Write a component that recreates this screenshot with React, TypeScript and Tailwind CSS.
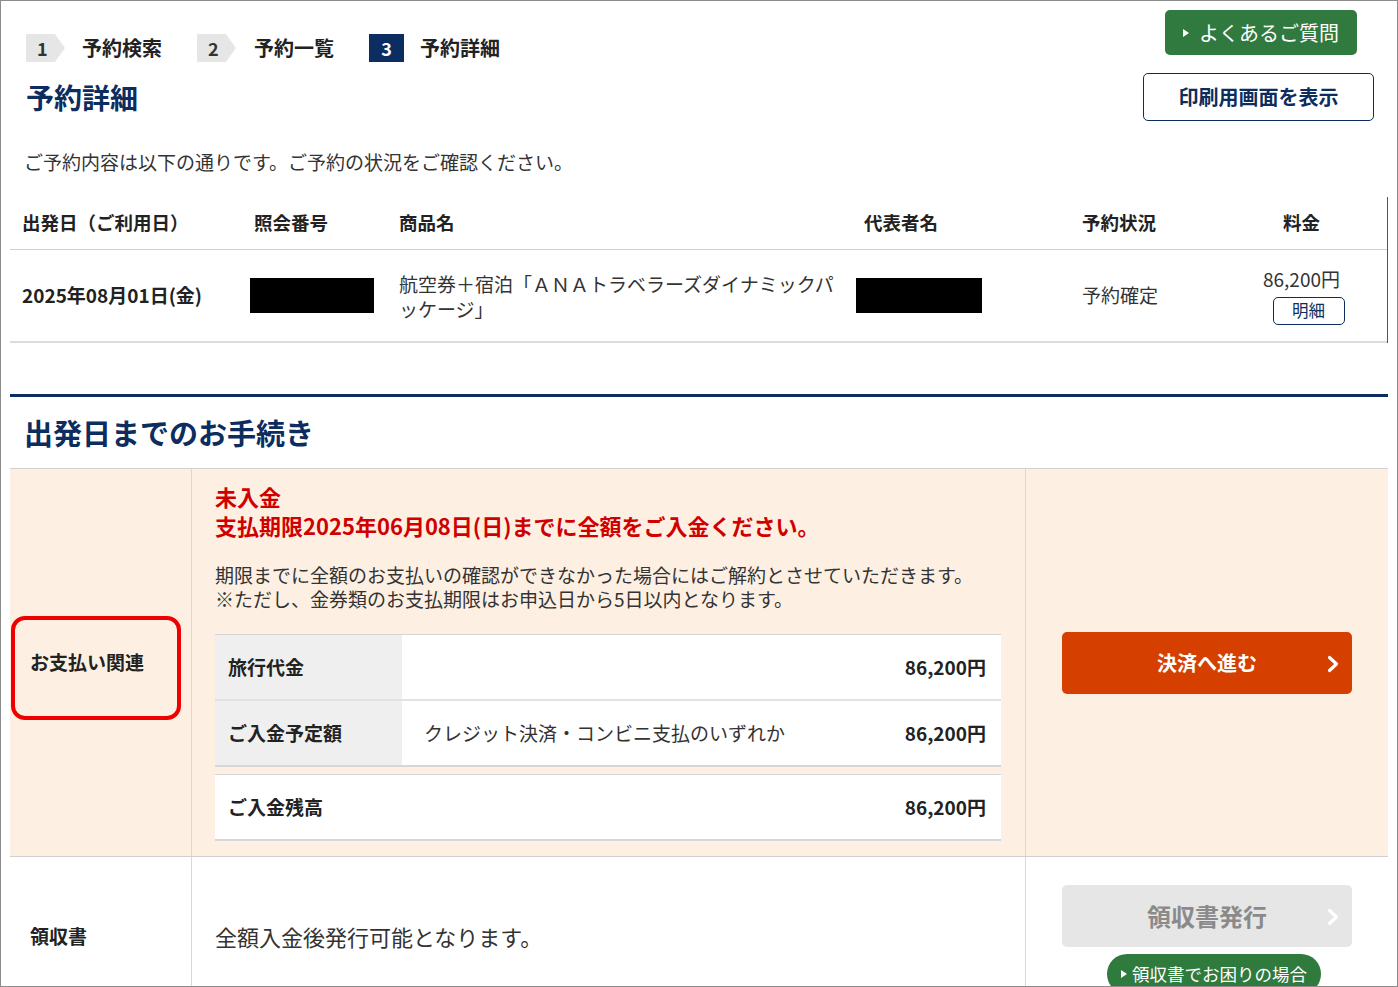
import React from 'react'

function StepBox({ n, active = false }: { n: string; active?: boolean }) {
  if (active) {
    return (
      <span className="flex h-[28px] w-[35px] items-center justify-center bg-[#0c2d62] text-[18px] font-bold leading-none text-white">
        {n}
      </span>
    )
  }
  return (
    <span className="flex h-[28px] w-[39px] items-center bg-[#e6e6e6] pl-[11px] text-[18px] font-bold leading-none text-[#333] [clip-path:polygon(0_0,74%_0,100%_50%,74%_100%,0_100%)]">
      {n}
    </span>
  )
}

function Triangle({ className = '' }: { className?: string }) {
  return (
    <svg viewBox="0 0 6 8" className={className} aria-hidden>
      <path d="M0 0 L6 4 L0 8 Z" fill="currentColor" />
    </svg>
  )
}

function Chevron({ className = '' }: { className?: string }) {
  return (
    <svg viewBox="0 0 12 18" className={className} aria-hidden>
      <path d="M2.5 2.5 L9.5 9 L2.5 15.5" fill="none" stroke="currentColor" strokeWidth="3.2" strokeLinecap="round" strokeLinejoin="round" />
    </svg>
  )
}

function PayRow({ label, note, amount, shaded = true }: { label: string; note?: string; amount: string; shaded?: boolean }) {
  return (
    <div className="flex h-[64px]">
      <div className={`flex w-[187px] items-center pl-[13px] text-[19px] font-bold ${shaded ? 'bg-[#efefef]' : 'bg-white'}`}>
        {label}
      </div>
      <div className="flex flex-1 items-center justify-between bg-white pl-[22px] pr-[15px] text-[19px]">
        <span className="text-[#333]">{note}</span>
        <span className="font-bold">{amount}</span>
      </div>
    </div>
  )
}

export default function App() {
  return (
    <div className="h-[987px] w-[1398px] overflow-hidden border border-[#8c8c8c] bg-white font-['Noto_Sans_CJK_JP','Noto_Sans',sans-serif] text-[#222]">
      {/* Header */}
      <div className="flex items-start justify-between">
        <div className="pl-[25px] pt-[33px]">
          <div className="flex items-center">
            <StepBox n="1" />
            <span className="ml-[17px] text-[20px] font-bold leading-none">予約検索</span>
            <span className="ml-[35px]" />
            <StepBox n="2" />
            <span className="ml-[18px] text-[20px] font-bold leading-none">予約一覧</span>
            <span className="ml-[35px]" />
            <StepBox n="3" active />
            <span className="ml-[16px] text-[20px] font-bold leading-none">予約詳細</span>
          </div>
          <h1 className="mt-[17px] text-[28px] font-bold leading-[36px] text-[#0c2d5e]">予約詳細</h1>
        </div>
        <div className="flex flex-col items-end pt-[9px]">
          <button className="mr-[40px] flex h-[45px] w-[192px] items-center justify-center gap-[10px] rounded-[5px] bg-[#317a3f] text-[20px] text-white">
            <Triangle className="h-[8px] w-[6px]" />
            よくあるご質問
          </button>
          <button className="mr-[23px] mt-[18px] flex h-[48px] w-[231px] items-center justify-center rounded-[5px] border border-[#0c2d5e] bg-white text-[20px] font-bold text-[#0c2d5e]">
            印刷用画面を表示
          </button>
        </div>
      </div>

      <p className="mt-[28px] pl-[23px] text-[19px] leading-[26px] text-[#333]">
        ご予約内容は以下の通りです。ご予約の状況をご確認ください。
      </p>

      {/* Reservation table */}
      <div className="mx-[9px] mt-[22px] border-r border-[#555]">
        <div className="grid h-[53px] grid-cols-[240px_149px_457px_226px_150px_1fr] items-center border-b border-[#d0d0d0] text-[18.5px] font-bold">
          <span className="pl-[12px]">出発日（ご利用日）</span>
          <span className="pl-[4px]">照会番号</span>
          <span>商品名</span>
          <span className="pl-[8px]">代表者名</span>
          <span>予約状況</span>
          <span className="pr-[16px] text-center">料金</span>
        </div>
        <div className="grid h-[93px] grid-cols-[240px_149px_457px_226px_150px_1fr] items-center border-b-2 border-[#dcdcdc] text-[19px]">
          <span className="pl-[12px] font-bold">2025年08月01日(金)</span>
          <span className="h-[35px] w-[124px] bg-black" />
          <span className="w-[445px] leading-[25px] text-[#333]">航空券＋宿泊「ＡＮＡトラベラーズダイナミックパッケージ」</span>
          <span className="h-[35px] w-[126px] bg-black" />
          <span className="text-[#333]">予約確定</span>
          <div className="flex flex-col items-center pr-[16px]">
            <span className="leading-[24px] text-[#333]">86,200円</span>
            <button className="ml-[14px] mt-[6px] flex h-[28px] w-[72px] items-center justify-center rounded-[5px] border border-[#0c2d5e] text-[16.5px] text-[#0c2d5e]">
              明細
            </button>
          </div>
        </div>
      </div>

      {/* Procedures */}
      <div className="mx-[9px] mt-[51px] border-t-[3px] border-[#0c2d5e]">
        <h2 className="flex h-[72px] items-center border-b border-[#d0d0d0] pl-[14px] text-[29px] font-bold text-[#0c2d5e]">
          出発日までのお手続き
        </h2>

        <div className="relative grid grid-cols-[182px_834px_1fr] border-b border-[#d0d0d0] bg-[#fdf0e3]">
          <div className="flex items-center border-r border-[#d8d8d8] pl-[20px] text-[19px] font-bold">お支払い関連</div>
          <div className="border-r border-[#d8d8d8] pb-[15px] pl-[23px] pt-[13px]">
            <p className="text-[22px] font-bold leading-[29px] text-[#d10000]">未入金</p>
            <p className="text-[22px] font-bold leading-[29px] text-[#d10000]">
              支払期限2025年06月08日(日)までに全額をご入金ください。
            </p>
            <p className="mt-[23px] text-[19px] leading-[24px] text-[#333]">
              期限までに全額のお支払いの確認ができなかった場合にはご解約とさせていただきます。
              <br />
              ※ただし、金券類のお支払期限はお申込日から5日以内となります。
            </p>
            <div className="mt-[23px] w-[786px]">
              <div className="border-t border-[#d5d5d5]">
                <div className="border-b-2 border-[#e2e2e2]">
                  <PayRow label="旅行代金" amount="86,200円" />
                </div>
                <div className="border-b-2 border-[#d6d6d6]">
                  <PayRow label="ご入金予定額" note="クレジット決済・コンビニ支払のいずれか" amount="86,200円" />
                </div>
              </div>
              <div className="mt-[7px] border-b-2 border-t border-[#d6d6d6]">
                <PayRow label="ご入金残高" amount="86,200円" shaded={false} />
              </div>
            </div>
          </div>
          <div className="flex items-center justify-center">
            <button className="relative flex h-[62px] w-[290px] items-center justify-center rounded-[5px] bg-[#d54000] text-[20px] font-bold text-white">
              決済へ進む
              <Chevron className="absolute right-[13px] top-[23px] h-[18px] w-[12px]" />
            </button>
          </div>
          {/* annotation */}
          <div className="absolute left-[1px] top-[147px] h-[104px] w-[170px] rounded-[14px] border-[4px] border-[#ee0000]" />
        </div>

        <div className="grid h-[158px] grid-cols-[182px_834px_1fr]">
          <div className="flex items-center border-r border-[#d8d8d8] pl-[20px] text-[19px] font-bold">領収書</div>
          <div className="flex items-center border-r border-[#d8d8d8] pl-[23px] text-[22px] text-[#333]">
            全額入金後発行可能となります。
          </div>
          <div className="flex flex-col items-center pt-[28px]">
            <button className="relative flex h-[62px] w-[290px] items-center justify-center rounded-[5px] bg-[#e6e6e6] text-[24px] font-bold text-[#8a8a8a]">
              領収書発行
              <Chevron className="absolute right-[13px] top-[23px] h-[18px] w-[12px] text-white" />
            </button>
            <button className="ml-[14px] mt-[7px] flex h-[40px] items-center gap-[5px] rounded-full bg-[#2f7a3d] px-[14px] text-[17.5px] text-white">
              <Triangle className="h-[8px] w-[6px]" />
              領収書でお困りの場合
            </button>
          </div>
        </div>
      </div>
    </div>
  )
}
